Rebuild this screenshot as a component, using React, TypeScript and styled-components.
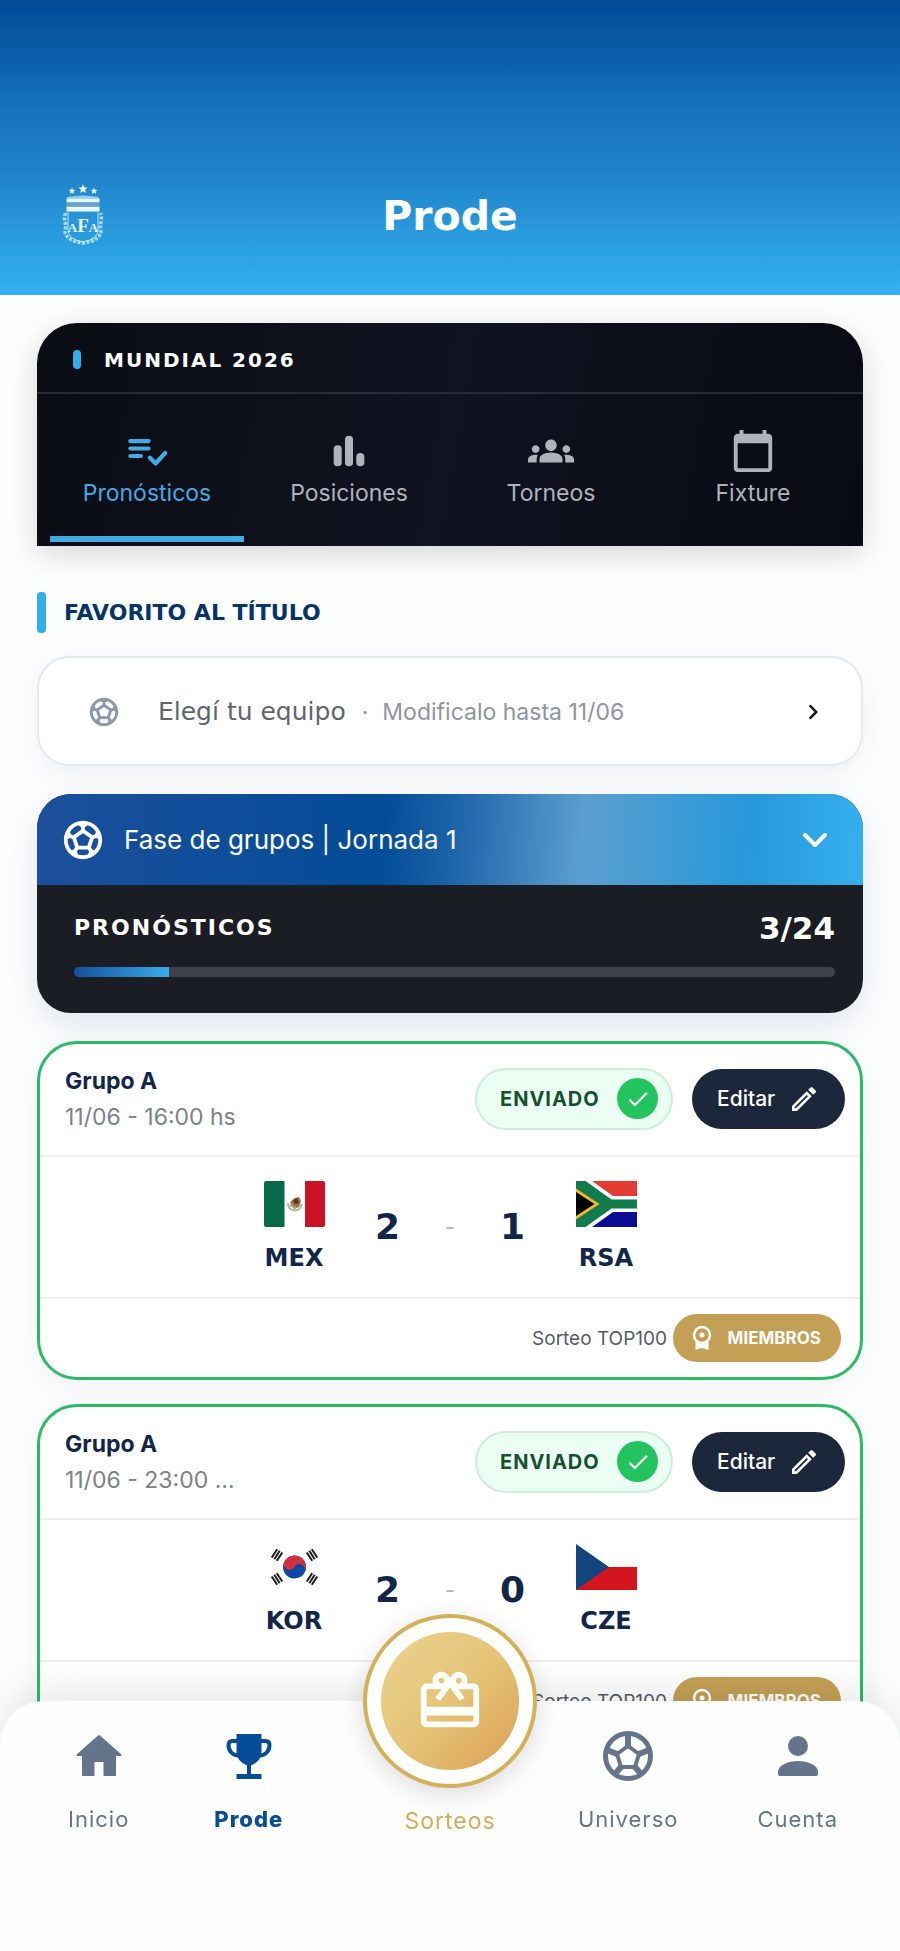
import React from "react";
import styled, { createGlobalStyle, css } from "styled-components";
import {
  MdCalendarToday,
  MdCheck,
  MdChevronRight,
  MdGroups,
  MdOutlineModeEdit,
  MdOutlineRedeem,
  MdSportsSoccer,
} from "react-icons/md";

const text = '"Inter", "Noto Sans", sans-serif';
const display = '"DejaVu Sans", "Inter", sans-serif';

const Global = createGlobalStyle`
  *, *::before, *::after { box-sizing: border-box; }
  body { margin: 0; background: #fdfefe; font-family: ${text}; color: #12264a; }
  h1, h2, h3, p { margin: 0; }
  button { font: inherit; border: 0; padding: 0; background: none; color: inherit; cursor: pointer; }
  a { color: inherit; text-decoration: none; }
  svg { display: block; flex: none; }
`;

/* ---------- header ---------- */

const Header = styled.header`
  display: grid;
  grid-template-columns: 1fr auto 1fr;
  align-items: center;
  padding: 184px 61px 47px;
  background: linear-gradient(180deg, #004a96 0%, #1673bd 38%, #1f82c8 58%, #33b0ee 98%);
`;

const Title = styled.h1`
  font: 700 41px/64px ${display};
  color: #fff;
`;

/* ---------- shared ---------- */

const Main = styled.main`
  display: flex;
  flex-direction: column;
  padding: 28px 37px 200px;
`;

const Marker = styled.span<{ $large?: boolean }>`
  width: ${(p) => (p.$large ? 9 : 8)}px;
  height: ${(p) => (p.$large ? 41 : 19)}px;
  border-radius: 4px;
  background: #33aee9;
`;

/* ---------- tournament tabs ---------- */

const Tournament = styled.section`
  border-radius: 40px 40px 0 0;
  background: linear-gradient(100deg, #0b0d14 0%, #101320 50%, #080b12 100%);
  box-shadow: 0 8px 32px rgba(0, 0, 0, 0.16);
`;

const TournamentHead = styled.div`
  display: flex;
  align-items: center;
  gap: 23px;
  height: 71px;
  padding: 4px 36px 0;
  border-bottom: 2px solid #292c36;
`;

const TournamentName = styled.h2`
  font: 700 20px/28px ${display};
  letter-spacing: 2px;
  color: #fff;
`;

const Tabs = styled.nav`
  display: grid;
  grid-template-columns: repeat(4, 1fr);
  gap: 8px;
  padding: 0 13px 4px;
`;

const Tab = styled.button<{ $active?: boolean }>`
  display: flex;
  flex-direction: column;
  align-items: center;
  height: 148px;
  padding-top: 34px;
  gap: 3px;
  font-size: 23px;
  line-height: 32px;
  color: #b0b2bd;
  border-bottom: 6px solid transparent;
  ${(p) =>
    p.$active &&
    css`
      color: #43abe3;
      border-color: #43abe3;
    `}
`;

/* ---------- favourite team ---------- */

const SectionHead = styled.div`
  display: flex;
  align-items: center;
  gap: 18px;
  margin: 46px 0 23px;
`;

const SectionTitle = styled.h2`
  font: 700 22px/28px ${display};
  color: #063469;
`;

const Favourite = styled.button`
  display: flex;
  align-items: center;
  height: 110px;
  padding: 2px 33px 0 48px;
  border: 2px solid #e6e9ee;
  border-radius: 32px;
  background: #fff;
  box-shadow: 0 8px 28px rgba(20, 50, 100, 0.07);
  text-align: left;
`;

const FavouriteLabel = styled.span`
  margin-left: 37px;
  font: 400 25px/32px ${display};
  color: #60656d;
`;

const FavouriteHint = styled.span`
  display: flex;
  flex: 1;
  gap: 14px;
  margin-left: 16px;
  font-size: 23px;
  line-height: 32px;
  color: #8f959f;
`;

/* ---------- round summary ---------- */

const Round = styled.section`
  margin-top: 28px;
  border-radius: 34px;
  overflow: hidden;
  background: #1a1d23;
  box-shadow: 0 12px 36px rgba(20, 50, 90, 0.12);
`;

const RoundToggle = styled.button`
  display: flex;
  align-items: center;
  gap: 18px;
  width: 100%;
  height: 91px;
  padding: 0 34px 0 23px;
  color: #fff;
  font-size: 26px;
  line-height: 32px;
  background: linear-gradient(93deg, #1c4f9c 0%, #034c98 42%, #1b62a8 50%, #5b9fd0 66%, #2798da 86%, #35b0ee 100%);

  span { flex: 1; text-align: left; }
`;

const RoundBody = styled.div`
  padding: 27px 28px 36px 37px;
`;

const RoundStats = styled.div`
  display: flex;
  justify-content: space-between;
  align-items: center;
  color: #fff;
`;

const RoundLabel = styled.h3`
  font: 700 22px/32px ${display};
  letter-spacing: 2px;
`;

const RoundCount = styled.span`
  font: 700 31px/32px ${display};
`;

const Track = styled.div`
  height: 10px;
  margin-top: 23px;
  border-radius: 5px;
  overflow: hidden;
  background: #3d424b;
`;

const Fill = styled.div`
  height: 100%;
  background: linear-gradient(90deg, #14509a, #3aace8);
`;

/* ---------- match cards ---------- */

const Matches = styled.div`
  display: flex;
  flex-direction: column;
  gap: 24px;
  margin-top: 28px;
`;

const Card = styled.article`
  border: 3px solid #2dba66;
  border-radius: 40px;
  background: #fff;
  box-shadow: 0 8px 32px rgba(20, 50, 90, 0.06);
`;

const CardHead = styled.div`
  display: flex;
  align-items: center;
  height: 113px;
  padding: 0 15px 2px 25px;
  border-bottom: 2px solid #edeff1;
`;

const When = styled.div`
  flex: 1;
  font-size: 23px;
  line-height: 36px;
  color: #7d828a;
`;

const Group = styled.h3`
  font-size: 23px;
  line-height: 36px;
  font-weight: 700;
  color: #12264a;
`;

const Sent = styled.span`
  display: flex;
  align-items: center;
  justify-content: space-between;
  width: 198px;
  height: 62px;
  padding: 0 13px 0 23px;
  border: 2px solid #cdeedd;
  border-radius: 31px;
  background: #eafef4;
  color: #17502f;
  font-size: 20px;
  font-weight: 700;
  letter-spacing: 1px;
`;

const Tick = styled.span`
  display: grid;
  place-items: center;
  width: 41px;
  height: 41px;
  border-radius: 50%;
  background: #23c45f;
  color: #fff;
`;

const Edit = styled.button`
  display: flex;
  align-items: center;
  justify-content: space-between;
  width: 153px;
  height: 60px;
  margin-left: 19px;
  padding: 0 25px;
  border-radius: 30px;
  background: #1c273c;
  color: #fff;
  font-size: 21px;
  font-weight: 500;
`;

const Score = styled.div`
  display: grid;
  grid-template-columns: 100px 87px 38px 87px 100px;
  justify-content: center;
  align-items: center;
  height: 142px;
  border-bottom: 2px solid #edeff1;
`;

const Team = styled.div`
  display: flex;
  flex-direction: column;
  align-items: center;
  gap: 15px;
  font: 700 24px/32px ${display};
`;

const Goals = styled.span`
  text-align: center;
  font: 700 36px/40px ${display};
`;

const Dash = styled.span`
  text-align: center;
  font-size: 22px;
  color: #b3b7be;
`;

const CardFoot = styled.div`
  display: flex;
  align-items: center;
  justify-content: flex-end;
  gap: 6px;
  height: 78px;
  padding-right: 19px;
  font-size: 19px;
  color: #555b66;
`;

const Members = styled.span`
  display: flex;
  align-items: center;
  justify-content: space-between;
  width: 168px;
  height: 48px;
  padding: 0 20px 0 19px;
  border-radius: 24px;
  background: #c3a056;
  color: #fff;
  font-size: 17px;
  font-weight: 700;
`;

/* ---------- bottom navigation ---------- */

const BottomNav = styled.nav`
  position: fixed;
  inset: auto 0 0;
  display: grid;
  grid-template-columns: 1fr 174px 1fr;
  height: 250px;
  border-radius: 44px 44px 0 0;
  background: #fefefe;
  box-shadow: 0 -8px 44px rgba(0, 0, 0, 0.1);
  letter-spacing: 1px;
`;

const NavSide = styled.div<{ $end?: boolean }>`
  display: flex;
  justify-content: ${(p) => (p.$end ? "flex-end" : "flex-start")};
  gap: ${(p) => (p.$end ? 79 : 85)}px;
  padding: ${(p) => (p.$end ? "25px 62px 0 0" : "25px 0 0 68px")};
`;

const NavItem = styled.a<{ $active?: boolean }>`
  display: flex;
  flex-direction: column;
  align-items: center;
  gap: 17px;
  font-size: 22px;
  line-height: 32px;
  font-weight: ${(p) => (p.$active ? 800 : 400)};
  color: ${(p) => (p.$active ? "#074c97" : "#64748b")};
`;

const Raffle = styled.a`
  display: flex;
  flex-direction: column;
  align-items: center;
  gap: 17px;
  margin-top: -87px;
  font-size: 23px;
  line-height: 32px;
  color: #cfae5c;
`;

const RaffleDisc = styled.span`
  display: grid;
  place-items: center;
  width: 174px;
  height: 174px;
  border: 4px solid #d3b15b;
  border-radius: 50%;
  background: #fffefb;
  box-shadow: 0 6px 26px rgba(0, 0, 0, 0.14);
  color: #fffefa;
`;

const RaffleCore = styled.span`
  display: grid;
  place-items: center;
  width: 138px;
  height: 138px;
  border-radius: 50%;
  background: linear-gradient(135deg, #ecd38f 0%, #e4c477 50%, #dfae62 80%, #d99857 100%);
`;

/* ---------- drawings ---------- */

const star = (cx: number, cy: number, r: number) =>
  Array.from({ length: 10 }, (_, i) => {
    const a = (Math.PI / 5) * i - Math.PI / 2;
    const d = i % 2 ? r * 0.45 : r;
    return `${(cx + Math.cos(a) * d).toFixed(2)},${(cy + Math.sin(a) * d).toFixed(2)}`;
  }).join(" ");

const Crest = () => (
  <svg width="44" height="64" viewBox="0 0 44 64" role="img" aria-label="AFA" fill="#e8f8ff">
    <polygon points={star(11, 7, 3.6)} />
    <polygon points={star(22, 5, 4.8)} />
    <polygon points={star(33, 7, 3.6)} />
    <path d="M6.500 13q15.500-3 31 0v1.500h-31z" opacity=".6" />
    <path d="M5.500 14.500h33v4h-33zM5.500 22.500h33v5h-33z" />
    <rect x="5.500" y="18.500" width="33" height="4" fill="#6fa0c8" />
    <path d="M7 28v18q0 9 15 12q15-3 15-12V28" fill="none" stroke="#bfe6fa" strokeWidth="1" />
    <path
      d="M4.500 29q-1.500 4-.5 9t0 10q2 9 18 11q16-2 18-11q-1-5 0-10t-.5-9"
      fill="none"
      stroke="#c8ebfb"
      strokeWidth="3.500"
      strokeDasharray="3 1.500"
      opacity=".8"
    />
    <text x="22" y="48" fontSize="13" fontFamily="Liberation Serif, serif" fontWeight="700" textAnchor="middle">
      A<tspan fontSize="19">F</tspan>A
    </text>
  </svg>
);

const ListCheck = () => (
  <svg width="46" height="46" viewBox="0 0 24 24" fill="none" stroke="currentColor" strokeWidth="2.200" strokeLinecap="round" strokeLinejoin="round">
    <path d="M3.300 6.800h9.500M3.300 10.700h9.500M3.300 14.600h5.500M13.500 15.500l3 3L21.500 13" />
  </svg>
);

const Bars = () => (
  <svg width="46" height="46" viewBox="0 0 24 24" fill="currentColor">
    <rect x="4" y="9" width="4.200" height="11" rx="2" />
    <rect x="9.900" y="4" width="4.200" height="16" rx="2" />
    <rect x="15.800" y="13" width="4.200" height="7" rx="2" />
  </svg>
);

const ChevronDown = () => (
  <svg width="28" height="28" viewBox="0 0 28 28" fill="none" stroke="currentColor" strokeWidth="4" strokeLinecap="round" strokeLinejoin="round">
    <path d="M4 9l10 10 10-10" />
  </svg>
);

const Rosette = () => (
  <svg width="20" height="26" viewBox="0 0 20 26" fill="none" stroke="currentColor">
    <circle cx="10" cy="10" r="8" strokeWidth="2.500" />
    <circle cx="10" cy="10" r="2.500" fill="currentColor" stroke="none" />
    <path d="M3.500 15v10l6.500-2 6.500 2V15q-3 3-6.500 3t-6.500-3z" fill="currentColor" stroke="none" />
  </svg>
);

const Home = () => (
  <svg width="60" height="60" viewBox="0 0 60 60" fill="currentColor" stroke="currentColor" strokeWidth="2" strokeLinejoin="round">
    <path d="M30 10L8.500 29H14v20h10.500V35h11v14H46V29h5.500z" />
  </svg>
);

const Trophy = () => (
  <svg width="60" height="60" viewBox="0 0 60 60" fill="currentColor">
    <path d="M17.500 8h25v18q0 9-10.500 13.500V48h10.500v5h-25v-5H28v-8.500Q17.500 35 17.500 26z" />
    <path d="M19 15h-5.500q-4 0-4 4c0 6 4 10.500 10 10.500M41 15h5.500q4 0 4 4c0 6-4 10.500-10 10.500" fill="none" stroke="currentColor" strokeWidth="4" />
  </svg>
);

const Ball = () => (
  <svg width="60" height="60" viewBox="0 0 60 60" fill="none" stroke="currentColor" strokeWidth="5" strokeLinejoin="round">
    <circle cx="30" cy="30" r="22.500" />
    <path strokeWidth="4" d="M30 20l11 8-4 13H23l-4-13z" />
    <path strokeWidth="6" d="M30 20V8M41 28l10-4M37 41l7 8M23 41l-7 8M19 28l-10-4" />
  </svg>
);

const Person = () => (
  <svg width="60" height="60" viewBox="0 0 60 60" fill="currentColor">
    <circle cx="30" cy="20" r="10" />
    <path d="M10 46c0-7 10-11 20-11s20 4 20 11v2q0 2-2 2H12q-2 0-2-2z" />
  </svg>
);

const flagSize = { width: 61, height: 46 };

const FlagMEX = () => (
  <svg {...flagSize} viewBox="0 0 61 46">
    <rect width="61" height="46" rx="2" fill="#fff" />
    <path d="M2 0h18.500v46H2q-2 0-2-2V2q0-2 2-2z" fill="#06694a" />
    <path d="M41 0h18q2 0 2 2v42q0 2-2 2H41z" fill="#cb1227" />
    <path d="M24 22q0 7 7 7.500q6-.5 6.500-6.500" fill="none" stroke="#a9b8a2" strokeWidth="2" />
    <path d="M26 21l5-4 4-1 2 4-2 6-5 2z" fill="#9c7045" />
    <path d="M29 19l4-2 2 5-4 1z" fill="#573419" />
    <path d="M26 24l6 3" stroke="#bca35b" strokeWidth="2" />
  </svg>
);

const FlagRSA = () => (
  <svg {...flagSize} viewBox="0 0 61 46">
    <rect width="61" height="46" rx="1" fill="#fff" />
    <path d="M16 0h45v15H37z" fill="#e23b31" />
    <path d="M16 46h45V31H37z" fill="#0b0d95" />
    <path d="M0 0h9.500l26 18.500H61v9H35.500L9.500 46H0z" fill="#107b4b" />
    <path d="M0 7.500L23.500 23 0 38.500z" fill="#f5b62d" />
    <path d="M0 11l18.500 12L0 35z" fill="#000" />
  </svg>
);

const Trigram = ({ x, y, r }: { x: number; y: number; r: number }) => (
  <g transform={`translate(${x} ${y}) rotate(${r})`} stroke="#1b1b1b" strokeWidth="2">
    <path d="M-5-3H5M-5 0H5M-5 3H5" />
  </g>
);

const FlagKOR = () => (
  <svg {...flagSize} viewBox="0 0 61 46">
    <rect width="61" height="46" fill="#fff" />
    <g transform="rotate(30 30.500 23)">
      <circle cx="30.500" cy="23" r="11.500" fill="#0a48a3" />
      <path d="M19 23a11.500 11.500 0 0 1 23 0a5.750 5.750 0 0 0-11.500 0a5.750 5.750 0 0 1-11.500 0z" fill="#d0303f" />
    </g>
    <Trigram x={13} y={11} r={-57} />
    <Trigram x={48} y={11} r={57} />
    <Trigram x={13} y={35} r={57} />
    <Trigram x={48} y={35} r={-57} />
  </svg>
);

const FlagCZE = () => (
  <svg {...flagSize} viewBox="0 0 61 46">
    <rect width="61" height="46" rx="1" fill="#fff" />
    <path d="M0 23h61v23H0z" fill="#d5151d" />
    <path d="M0 0l33 23L0 46z" fill="#12457e" />
  </svg>
);

/* ---------- page ---------- */

const tabs = [
  { label: "Pronósticos", icon: <ListCheck />, active: true },
  { label: "Posiciones", icon: <Bars /> },
  { label: "Torneos", icon: <MdGroups size={46} /> },
  { label: "Fixture", icon: <MdCalendarToday size={46} /> },
];

const matches = [
  { when: "11/06 - 16:00 hs", home: "MEX", away: "RSA", homeFlag: <FlagMEX />, awayFlag: <FlagRSA />, goals: [2, 1] },
  { when: "11/06 - 23:00 ...", home: "KOR", away: "CZE", homeFlag: <FlagKOR />, awayFlag: <FlagCZE />, goals: [2, 0] },
];

const done = 3;
const total = 24;

export default function App() {
  return (
    <>
      <Global />
      <Header>
        <Crest />
        <Title>Prode</Title>
      </Header>
      <Main>
        <Tournament>
          <TournamentHead>
            <Marker />
            <TournamentName>MUNDIAL 2026</TournamentName>
          </TournamentHead>
          <Tabs>
            {tabs.map((t) => (
              <Tab key={t.label} $active={t.active}>
                {t.icon}
                {t.label}
              </Tab>
            ))}
          </Tabs>
        </Tournament>

        <SectionHead>
          <Marker $large />
          <SectionTitle>FAVORITO AL TÍTULO</SectionTitle>
        </SectionHead>
        <Favourite>
          <MdSportsSoccer size={34} color="#8e97a6" />
          <FavouriteLabel>Elegí tu equipo</FavouriteLabel>
          <FavouriteHint>
            <span>·</span>
            <span>Modificalo hasta 11/06</span>
          </FavouriteHint>
          <MdChevronRight size={30} color="#101820" />
        </Favourite>

        <Round>
          <RoundToggle>
            <MdSportsSoccer size={46} />
            <span>Fase de grupos | Jornada 1</span>
            <ChevronDown />
          </RoundToggle>
          <RoundBody>
            <RoundStats>
              <RoundLabel>PRONÓSTICOS</RoundLabel>
              <RoundCount>
                {done}/{total}
              </RoundCount>
            </RoundStats>
            <Track>
              <Fill style={{ width: `${(done / total) * 100}%` }} />
            </Track>
          </RoundBody>
        </Round>

        <Matches>
          {matches.map((m) => (
            <Card key={m.home}>
              <CardHead>
                <When>
                  <Group>Grupo A</Group>
                  <p>{m.when}</p>
                </When>
                <Sent>
                  ENVIADO
                  <Tick>
                    <MdCheck size={26} />
                  </Tick>
                </Sent>
                <Edit>
                  Editar
                  <MdOutlineModeEdit size={32} />
                </Edit>
              </CardHead>
              <Score>
                <Team>
                  {m.homeFlag}
                  {m.home}
                </Team>
                <Goals>{m.goals[0]}</Goals>
                <Dash>-</Dash>
                <Goals>{m.goals[1]}</Goals>
                <Team>
                  {m.awayFlag}
                  {m.away}
                </Team>
              </Score>
              <CardFoot>
                Sorteo TOP100
                <Members>
                  <Rosette />
                  MIEMBROS
                </Members>
              </CardFoot>
            </Card>
          ))}
        </Matches>
      </Main>

      <BottomNav>
        <NavSide>
          <NavItem href="#inicio">
            <Home />
            Inicio
          </NavItem>
          <NavItem href="#prode" $active>
            <Trophy />
            Prode
          </NavItem>
        </NavSide>
        <Raffle href="#sorteos">
          <RaffleDisc>
            <RaffleCore>
              <MdOutlineRedeem size={70} />
            </RaffleCore>
          </RaffleDisc>
          Sorteos
        </Raffle>
        <NavSide $end>
          <NavItem href="#universo">
            <Ball />
            Universo
          </NavItem>
          <NavItem href="#cuenta">
            <Person />
            Cuenta
          </NavItem>
        </NavSide>
      </BottomNav>
    </>
  );
}
